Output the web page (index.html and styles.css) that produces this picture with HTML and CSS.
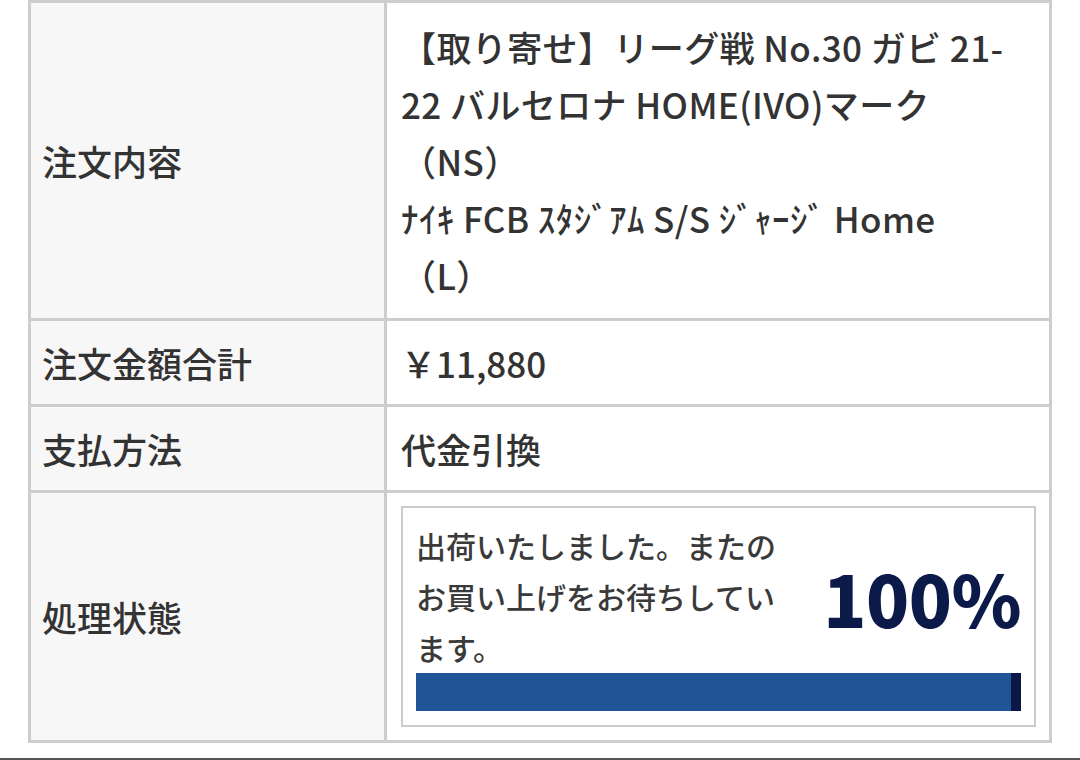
FILE: index.html
```html
<!DOCTYPE html>
<html lang="ja">
<head>
<meta charset="utf-8">
<title>注文内容</title>
<link rel="stylesheet" href="styles.css">
</head>
<body>
<table class="order">
  <tr>
    <th class="label">注文内容</th>
    <td class="value items">【取り寄せ】リーグ戦 No.30 ガビ 21-<br>22 バルセロナ HOME(IVO)マーク<br>（NS）<br>ﾅｲｷ FCB ｽﾀｼﾞｱﾑ S/S ｼﾞｬｰｼﾞ Home<br>（L）</td>
  </tr>
  <tr>
    <th class="label">注文金額合計</th>
    <td class="value">￥11,880</td>
  </tr>
  <tr>
    <th class="label">支払方法</th>
    <td class="value">代金引換</td>
  </tr>
  <tr>
    <th class="label">処理状態</th>
    <td class="value">
      <div class="status">
        <div class="status-top">
          <p class="status-text">出荷いたしました。またのお買い上げをお待ちしています。</p>
          <span class="status-pct">100%</span>
        </div>
        <div class="bar"><div class="bar-fill" style="width:100%"></div></div>
      </div>
    </td>
  </tr>
</table>
<div class="page-rule"></div>
</body>
</html>
```

FILE: styles.css
```css
html, body {
  margin: 0;
  padding: 0;
  background: #ffffff;
}

body {
  font-family: "Noto Sans CJK JP", "Noto Sans", sans-serif;
  color: #333333;
  width: 1080px;
  height: 760px;
  overflow: hidden;
}

.order {
  margin-left: 28px;
  width: 1024px;
  border-collapse: separate;
  border-spacing: 0;
  table-layout: fixed;
  border-top: 3px solid #cdcdcd;
  border-left: 3px solid #cdcdcd;
}

.order th,
.order td {
  border-right: 3px solid #cdcdcd;
  border-bottom: 3px solid #cdcdcd;
  padding: 13px 13px 13px 14px;
  font-size: 35px;
  font-weight: 500;
  line-height: 57px;
  vertical-align: middle;
  text-align: left;
  white-space: nowrap;
}

.order th.label {
  width: 329px;
  background: #f7f7f7;
  padding-left: 11px;
}

.value {
  background: #ffffff;
}

.order td.items {
  padding-top: 15px;
  padding-bottom: 15px;
  letter-spacing: 0.4px;
}

.status {
  border: 2px solid #cccccc;
  padding: 12px 13px 14px 13px;
  white-space: normal;
}

.status-top {
  display: flex;
  align-items: center;
  justify-content: space-between;
}

.status-text {
  margin: 0;
  width: 372px;
  font-size: 30px;
  line-height: 51px;
  font-weight: 500;
  color: #3a3a3a;
}

.status-pct {
  font-size: 71px;
  line-height: 72px;
  font-weight: 900;
  color: #0b1a48;
  letter-spacing: -0.5px;
}

.bar {
  height: 38px;
  background: #0a1845;
}

.bar-fill {
  height: 38px;
  background: #1f5597;
  box-sizing: border-box;
  border-right: 10px solid #0a1845;
}

.page-rule {
  margin-top: 15px;
  border-top: 3px solid #555555;
  height: 20px;
}
```
